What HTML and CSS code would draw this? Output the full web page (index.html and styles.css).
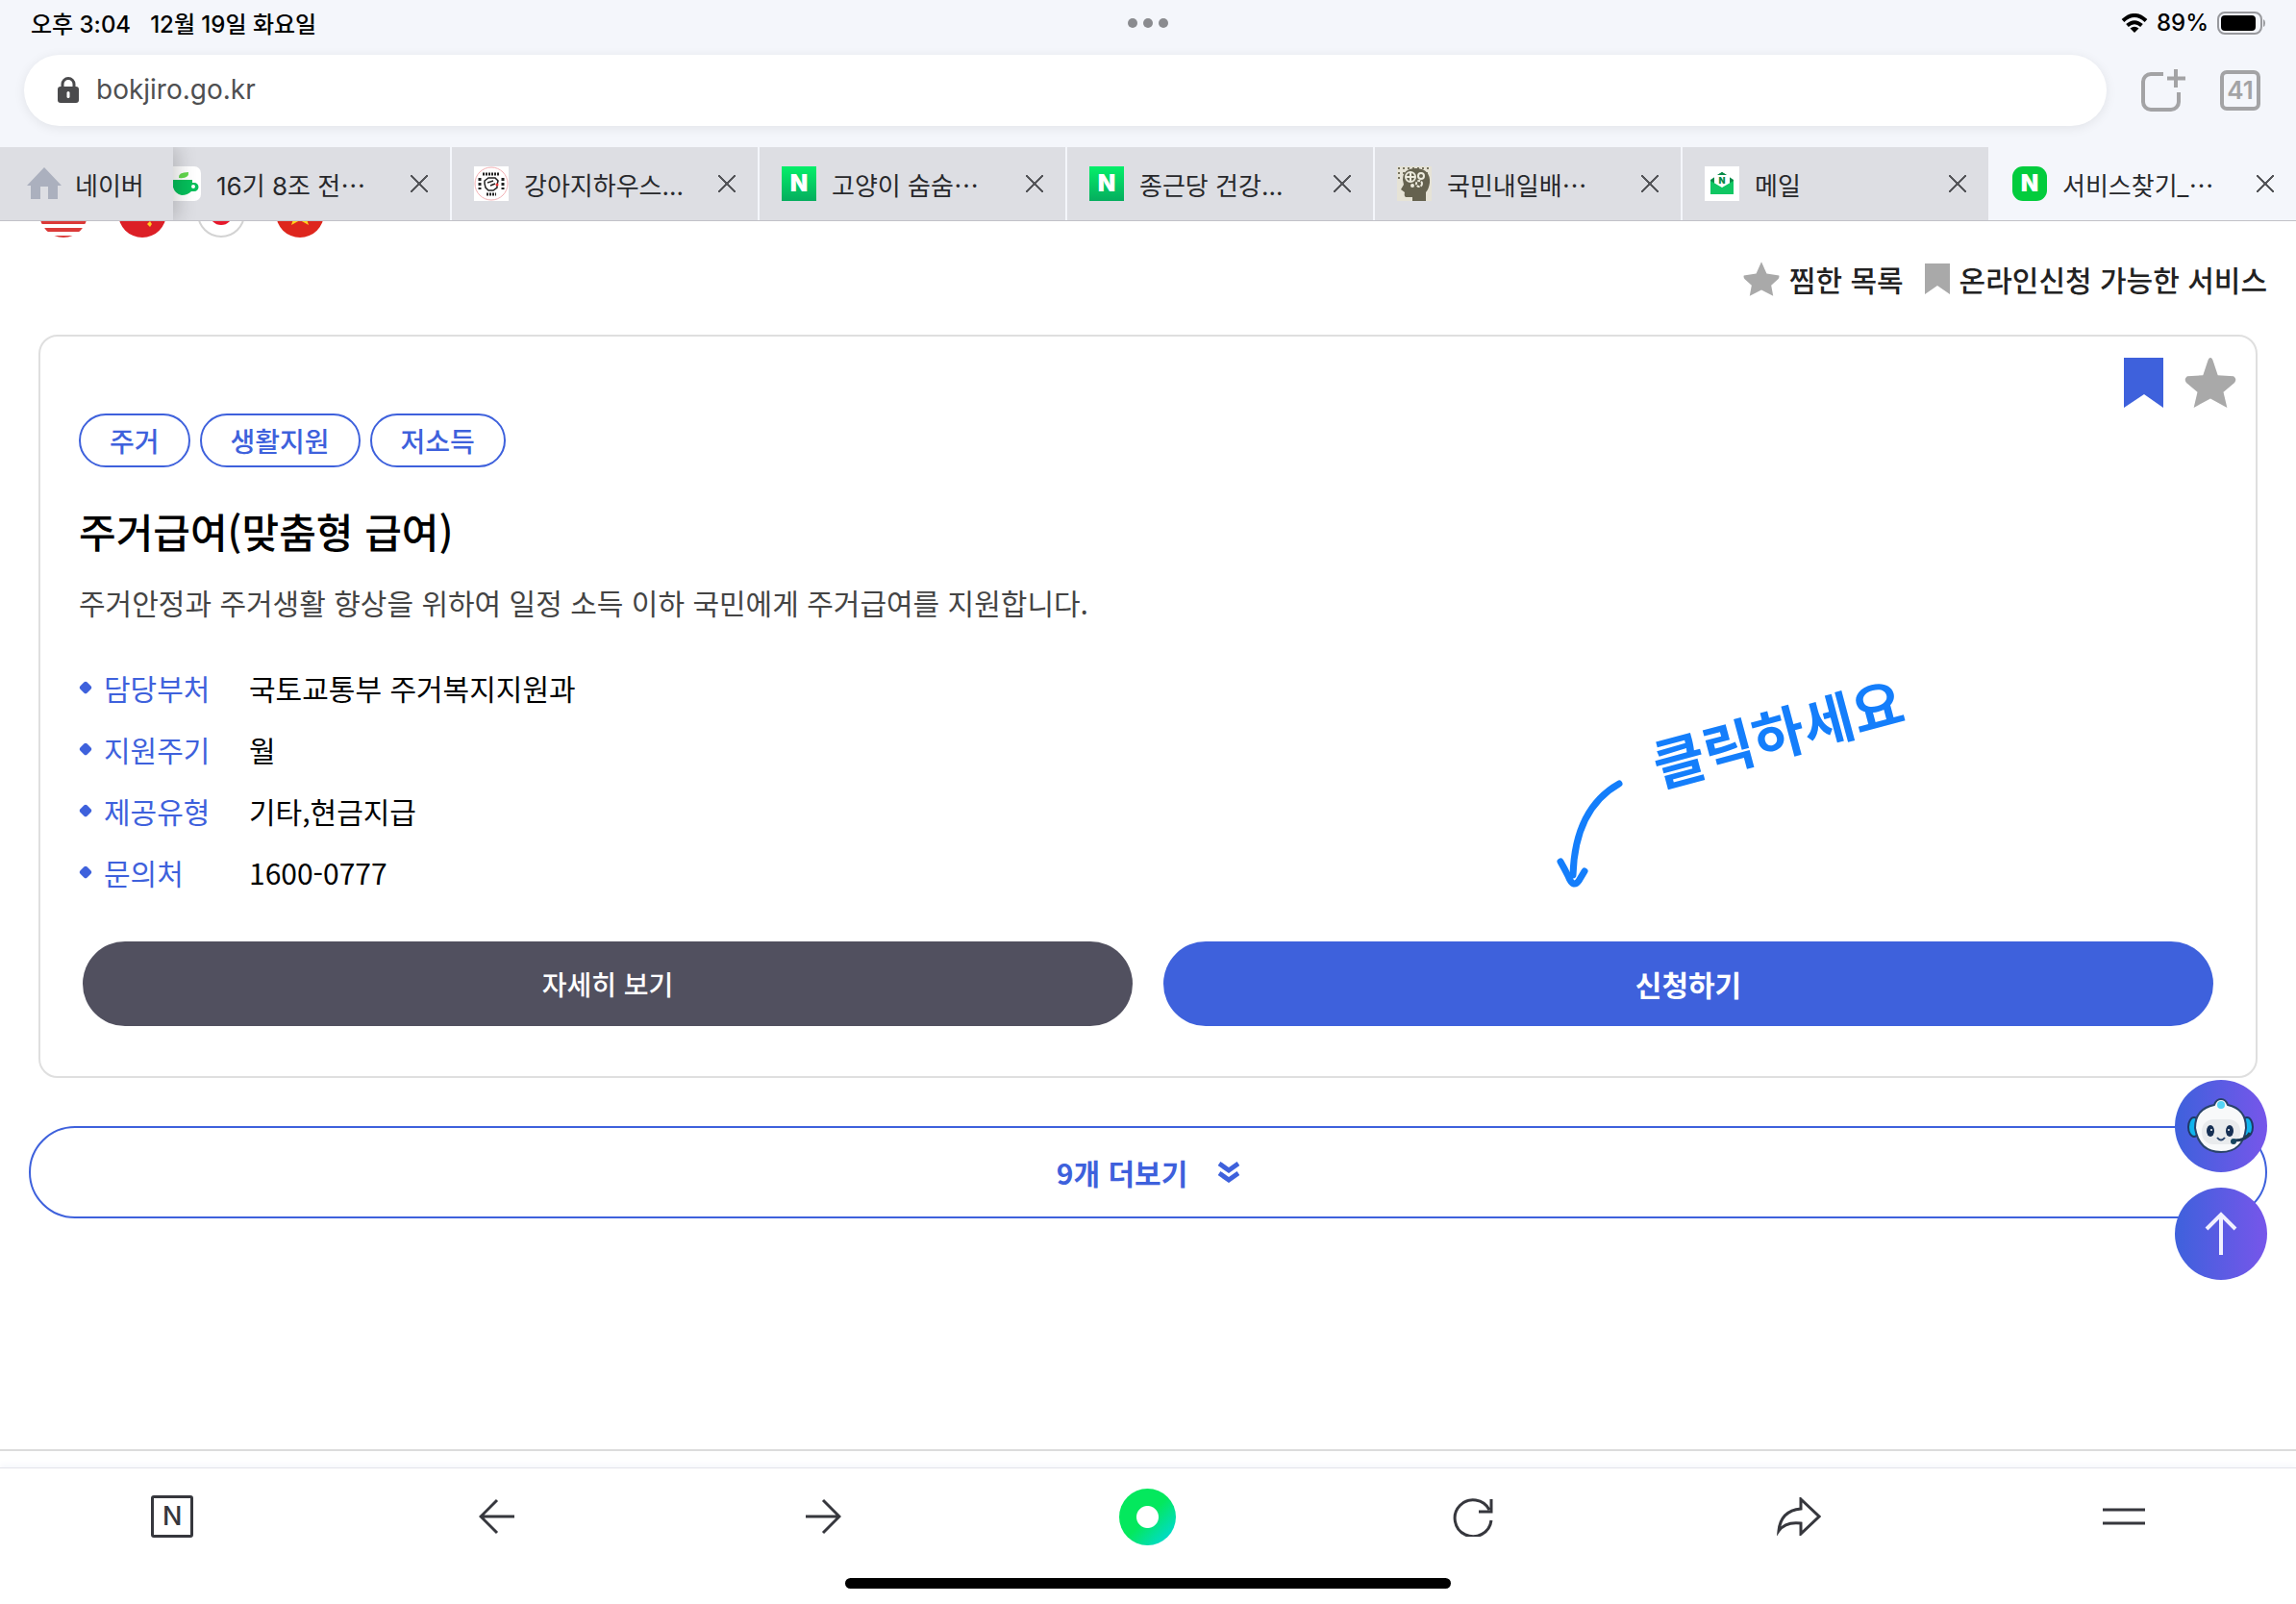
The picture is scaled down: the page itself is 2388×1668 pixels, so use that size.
FILE: index.html
```html
<!DOCTYPE html>
<html lang="ko">
<head>
    <meta charset="UTF-8">
    <meta name="viewport" content="width=device-width, initial-scale=1.0">
    <title>서비스찾기_복지로</title>
    <link rel="stylesheet" href="styles.css">
</head>
<body>
    <header class="browser-top">
        <div class="status-bar">
            <div class="status-left">
                <span>오후 3:04</span>
                <span>12월 19일 화요일</span>
            </div>
            <svg class="status-dots" width="44" height="12" viewBox="0 0 44 12" fill="#8a8b8f">
                <circle cx="6" cy="6" r="5"/><circle cx="22" cy="6" r="5"/><circle cx="38" cy="6" r="5"/>
            </svg>
            <div class="status-right">
                <svg width="28" height="20" viewBox="0 0 28 20" fill="none" stroke="#000" stroke-width="4">
                    <path d="M2 7.500Q14 -3.500 26 7.500"/>
                    <path d="M6.500 12.500Q14 6 21.500 12.500"/>
                    <path d="M14 20L9.500 15.500Q14 12 18.500 15.500Z" fill="#000" stroke="none"/>
                </svg>
                <span>89%</span>
                <svg width="50" height="24" viewBox="0 0 50 24">
                    <rect x="1" y="1" width="45" height="22" rx="7" fill="none" stroke="#98999d" stroke-width="2"/>
                    <rect x="4" y="4" width="36" height="16" rx="4"/>
                    <path d="M48 8Q50 9 50 12T48 16Z" fill="#98999d"/>
                </svg>
            </div>
        </div>

        <div class="address-row">
            <label class="address-bar">
                <svg width="22" height="28" viewBox="0 0 22 28">
                    <path d="M5 12V7.500a6 6 0 0 1 12 0V12" fill="none" stroke="#4a4a4c" stroke-width="3"/>
                    <rect x="0" y="10" width="22" height="17" rx="3" fill="#4a4a4c"/>
                    <rect x="9.500" y="15" width="3" height="7" rx="1.500" fill="#fff"/>
                </svg>
                <input type="text" class="address-input" value="bokjiro.go.kr" aria-label="주소">
            </label>
            <button class="icon-button" aria-label="새 탭">
                <svg width="48" height="46" viewBox="0 0 48 46" fill="none" stroke="#a3a3a5" stroke-width="4">
                    <path d="M24 6H11a8 8 0 0 0-8 8v21a8 8 0 0 0 8 8h21a8 8 0 0 0 8-8V25"/>
                    <path d="M37 1v19M28 10.500h19"/>
                </svg>
            </button>
            <button class="tab-count">41</button>
        </div>

        <nav class="tab-bar">
            <a href="#" class="home-tab">
                <svg width="36" height="34" viewBox="0 0 36 34" fill="#abb0be">
                    <path d="M18 0L36 19H32V33H22V20H14V33H4V19H0Z"/>
                </svg>
                <span>네이버</span>
            </a>
            <div class="tab-list">
                <div class="tab">
                    <svg class="favicon" viewBox="0 0 36 36">
                        <rect width="36" height="36" rx="7" fill="#fff"/>
                        <path d="M13 12Q12 6 23 6Q24 13 13 12Z" fill="#62d84e"/>
                        <path d="M6 14H27V17H29a4 4 0 0 1 0 9H26Q22 30 16 30Q6 28 6 14Z" fill="#05bf5b"/>
                        <circle cx="28" cy="21" r="2" fill="#fff"/>
                    </svg>
                    <span class="tab-title">16기 8조 전⋯</span>
                    <button class="tab-close" aria-label="닫기"></button>
                </div>
                <div class="tab">
                    <svg class="favicon" viewBox="0 0 36 36" fill="none" stroke="#222">
                        <rect width="36" height="36" fill="#fff" stroke="none"/>
                        <circle cx="18" cy="18" r="17" stroke="#f3b0b4"/>
                        <path d="M11 15L15 12H22L25 15L24 19V22L20 25H15L12 22L11 18ZM14 17L20 15M22 18L17 20" stroke-width="1.500"/>
                        <path d="M9 8H27M13 29H23" stroke-width="3" stroke-dasharray="2 1"/>
                        <path d="M6 12V24M30 12V24" stroke-width="3" stroke-dasharray="3 2"/>
                        <circle cx="24" cy="19" r="1.500" fill="#e33" stroke="none"/>
                    </svg>
                    <span class="tab-title">강아지하우스...</span>
                    <button class="tab-close" aria-label="닫기"></button>
                </div>
                <div class="tab">
                    <span class="favicon naver">N</span>
                    <span class="tab-title">고양이 숨숨⋯</span>
                    <button class="tab-close" aria-label="닫기"></button>
                </div>
                <div class="tab">
                    <span class="favicon naver">N</span>
                    <span class="tab-title">종근당 건강...</span>
                    <button class="tab-close" aria-label="닫기"></button>
                </div>
                <div class="tab">
                    <svg class="favicon" viewBox="0 0 36 36">
                        <rect width="36" height="36" fill="#e6e3d6"/>
                        <path d="M1 2H34M1 7H9M30 7H35M1 12H6" stroke="#77735f" stroke-width="2" stroke-dasharray="2 3"/>
                        <path d="M6 14Q6 2 20 2Q35 3 34 17Q33 24 30 27V36H16V32H9Q7 31 8 27L4 24L7 19Z" fill="#65624f"/>
                        <g fill="none" stroke="#eceadd" stroke-width="2">
                            <circle cx="14" cy="11" r="5"/><circle cx="25" cy="10" r="3"/><circle cx="23" cy="18" r="3" stroke-dasharray="3 1"/>
                            <path d="M14 7V15M10 11H18"/>
                        </g>
                        <circle cx="16" cy="20" r="2" fill="#eceadd"/>
                    </svg>
                    <span class="tab-title">국민내일배⋯</span>
                    <button class="tab-close" aria-label="닫기"></button>
                </div>
                <div class="tab">
                    <svg class="favicon" viewBox="0 0 36 36">
                        <rect width="36" height="36" fill="#fff"/>
                        <path d="M6 14L18 6L30 14V18H6Z" fill="#078a48"/>
                        <path d="M10 9H26V18L18 23L10 18Z" fill="#fff"/>
                        <path d="M13 9L18 6L23 9Z" fill="#078a48"/>
                        <path d="M6 15L18 22L30 15V29H6Z" fill="#10c763"/>
                        <text x="18" y="18" text-anchor="middle" class="mail-mark">N</text>
                    </svg>
                    <span class="tab-title">메일</span>
                    <button class="tab-close" aria-label="닫기"></button>
                </div>
                <div class="tab active">
                    <span class="favicon naver rounded">N</span>
                    <span class="tab-title">서비스찾기_⋯</span>
                    <button class="tab-close" aria-label="닫기"></button>
                </div>
            </div>
        </nav>
    </header>

    <main class="page">
        <div class="flags">
            <svg width="50" height="50" viewBox="0 0 50 50">
                <clipPath id="flagClip"><circle cx="25" cy="25" r="25"/></clipPath>
                <g clip-path="url(#flagClip)">
                    <rect width="50" height="50" fill="#fff"/>
                    <path d="M0 26H50M0 34H50M0 42H50M0 50H50" stroke="#db3a38" stroke-width="4"/>
                </g>
            </svg>
            <svg width="50" height="50" viewBox="0 0 50 50">
                <circle cx="25" cy="25" r="25" fill="#dc1f26"/>
                <path d="M33 33l2 3-2 3-3-3z" fill="#ffcf20"/>
            </svg>
            <svg width="50" height="50" viewBox="0 0 50 50">
                <circle cx="25" cy="25" r="24" fill="#fff" stroke="#d3d3d3" stroke-width="2"/>
                <circle cx="25" cy="25" r="12" fill="#e6182b"/>
            </svg>
            <svg width="50" height="50" viewBox="0 0 50 50">
                <circle cx="25" cy="25" r="25" fill="#de261d"/>
                <path d="M25 10L29 21H40L31 28L34 37L25 32L16 37L19 28L10 21H21Z" fill="#ffd21c"/>
            </svg>
        </div>

        <div class="legend">
            <a href="#" class="legend-item">
                <svg width="38" height="38" viewBox="0 0 56 56" fill="#a9a9a9"><path d="M28 2L36 20L55 23Q56 25 54 28L43 38L46 54L28 45L10 54L13 38L2 28Q0 25 1 23L20 20Z"/></svg>
                찜한 목록
            </a>
            <a href="#" class="legend-item">
                <svg width="26" height="32" viewBox="0 0 26 32" fill="#a9a9a9"><path d="M0 0H26V32L13 23L0 32Z"/></svg>
                온라인신청 가능한 서비스
            </a>
        </div>

        <article class="card">
            <div class="card-marks">
                <button class="icon-button" aria-label="온라인신청 가능">
                    <svg width="41" height="52" viewBox="0 0 41 52" fill="#3e61dc"><path d="M0 0H41V52L21 38L0 52Z"/></svg>
                </button>
                <button class="icon-button" aria-label="찜하기">
                    <svg width="56" height="54" viewBox="0 0 56 56" fill="#a9a9a9"><path d="M28 1Q30 1 31 5L36 20L53 21Q57 24 54 28L42 38L46 55L28 45L10 55L14 38L2 28Q-1 24 3 21L20 20L25 5Q26 1 28 1Z"/></svg>
                </button>
            </div>

            <ul class="tags">
                <li>주거</li>
                <li>생활지원</li>
                <li>저소득</li>
            </ul>
            <h2 class="card-title">주거급여(맞춤형 급여)</h2>
            <p class="card-desc">주거안정과 주거생활 향상을 위하여 일정 소득 이하 국민에게 주거급여를 지원합니다.</p>

            <dl class="info">
                <div><dt>담당부처</dt><dd>국토교통부 주거복지지원과</dd></div>
                <div><dt>지원주기</dt><dd>월</dd></div>
                <div><dt>제공유형</dt><dd>기타,현금지급</dd></div>
                <div><dt>문의처</dt><dd>1600-0777</dd></div>
            </dl>

            <div class="actions">
                <button class="detail-button">자세히 보기</button>
                <button class="apply-button">신청하기</button>
            </div>

            <!-- pen note over the apply button -->
            <svg class="note" width="440" height="300" viewBox="0 0 440 300">
                <g fill="none" stroke="#147efb" stroke-width="7" stroke-linecap="round" stroke-linejoin="round">
                    <path d="M104 155Q58 181 56 250"/>
                    <path d="M43 236Q47 243 51 251Q56 264 62 256L68 246"/>
                </g>
                <text x="270" y="125" text-anchor="middle" transform="rotate(-15 270 105)">클릭하세요</text>
            </svg>
        </article>

        <button class="more-button">
            9개 더보기
            <svg width="22" height="22" viewBox="0 0 22 22" fill="none" stroke="#3e61dc" stroke-width="5">
                <path d="M1 2L11 9L21 2M1 12L11 19L21 12"/>
            </svg>
        </button>

        <div class="floating">
            <button class="float-button" aria-label="챗봇">
                <svg width="70" height="60" viewBox="0 0 70 60">
                    <ellipse cx="7" cy="31" rx="6" ry="10" fill="#10b4ee" stroke="#1d3a66" stroke-width="2"/>
                    <ellipse cx="62" cy="31" rx="6" ry="10" fill="#10b4ee" stroke="#1d3a66" stroke-width="2"/>
                    <path d="M28 8Q30 2 35 2T42 8Q61 12 61 32Q58 57 35 57T8 32Q8 12 28 8Z" fill="#f8f9fa" stroke="#29436a" stroke-width="2"/>
                    <rect x="15" y="23" width="40" height="26" rx="12" fill="#e9ebed"/>
                    <circle cx="35" cy="8" r="4" fill="#55d5f7"/>
                    <ellipse cx="24" cy="35" rx="4" ry="6" fill="#162f53"/>
                    <ellipse cx="44" cy="35" rx="4" ry="6" fill="#162f53"/>
                    <circle cx="25" cy="34" r="1" fill="#fff"/><circle cx="43" cy="34" r="1" fill="#fff"/>
                    <path d="M31 42Q35 47 39 42" fill="none" stroke="#29436a" stroke-width="2"/>
                    <path d="M65 37Q61 45 49 45" fill="none" stroke="#1d3a55" stroke-width="3"/>
                    <circle cx="48" cy="46" r="3" fill="#14455f"/>
                </svg>
            </button>
            <button class="float-button" aria-label="맨 위로">
                <svg width="34" height="46" viewBox="0 0 34 46" fill="none" stroke="#f1f0ff" stroke-width="4">
                    <path d="M17 45V3M2 18L17 3L32 18"/>
                </svg>
            </button>
        </div>
    </main>

    <footer class="toolbar">
        <div class="toolbar-items">
            <button class="icon-button" aria-label="네이버 홈"><span class="n-box">N</span></button>
            <button class="icon-button" aria-label="뒤로">
                <svg width="38" height="38" viewBox="0 0 38 38"><path d="M37 19H2M19 2L2 19L19 36"/></svg>
            </button>
            <button class="icon-button" aria-label="앞으로">
                <svg width="38" height="38" viewBox="0 0 38 38"><path d="M1 19H36M19 2L36 19L19 36"/></svg>
            </button>
            <button class="icon-button" aria-label="그린닷"><span class="green-dot"></span></button>
            <button class="icon-button" aria-label="새로고침">
                <svg width="42" height="42" viewBox="0 0 42 42"><path d="M40 25A19 19 0 1 1 38 14M40 3V16H27"/></svg>
            </button>
            <button class="icon-button" aria-label="공유">
                <svg width="46" height="40" viewBox="0 0 46 40"><path d="M25 2L44 20L25 38V27Q9 25 2 35Q4 14 25 12Z"/></svg>
            </button>
            <button class="icon-button" aria-label="메뉴">
                <svg width="44" height="20" viewBox="0 0 44 20"><path d="M0 3H44M0 17H44"/></svg>
            </button>
        </div>
        <div class="home-indicator"></div>
    </footer>
</body>
</html>
```

FILE: styles.css
```css
* {
    margin: 0;
    padding: 0;
    box-sizing: border-box;
}

body {
    min-height: 100vh;
    display: flex;
    flex-direction: column;
    background: #fff;
    color: #000;
    font-family: 'Noto Sans CJK KR', sans-serif;
    font-size: 30px;
}

button,
input {
    border: none;
    background: none;
    font-family: inherit;
    font-size: inherit;
    color: inherit;
}

button {
    cursor: pointer;
}

a {
    color: inherit;
    text-decoration: none;
}

svg {
    display: block;
    flex: none;
}

.icon-button {
    display: flex;
    align-items: center;
    justify-content: center;
}

/* browser chrome */
.browser-top {
    position: relative;
    z-index: 1;
    background: #f4f6fb;
    font-family: Inter, 'Noto Sans CJK KR', sans-serif;
}

.status-bar {
    height: 47px;
    padding: 0 32px;
    display: grid;
    grid-template-columns: 1fr auto 1fr;
    align-items: center;
    font-size: 24px;
    font-weight: 500;
}

.status-left {
    display: flex;
    gap: 20px;
}

.status-right {
    display: flex;
    align-items: center;
    justify-content: flex-end;
    gap: 9px;
}

.address-row {
    display: flex;
    align-items: center;
    gap: 35px;
    padding: 10px 37px 22px 25px;
}

.address-bar {
    flex: 1;
    height: 74px;
    padding: 0 35px;
    display: flex;
    align-items: center;
    gap: 18px;
    border-radius: 37px;
    background: #fff;
    box-shadow: 0 2px 12px rgba(0, 0, 0, 0.08);
}

.address-input {
    flex: 1;
    padding-bottom: 2px;
    color: #4f4f51;
    font-size: 28px;
    outline: none;
}

.tab-count {
    width: 42px;
    height: 42px;
    border: 4px solid #a3a3a5;
    border-radius: 7px;
    color: #a3a3a5;
    font-size: 26px;
    font-weight: 600;
    line-height: 34px;
}

.tab-bar {
    display: flex;
    height: 77px;
    background: #dddee3;
    border-bottom: 1px solid #c2c2c8;
    color: #27282b;
    font-size: 26px;
}

.home-tab {
    width: 180px;
    flex: none;
    display: flex;
    align-items: center;
    gap: 14px;
    padding-left: 28px;
    box-shadow: 4px 0 20px rgba(0, 0, 0, 0.2);
    clip-path: inset(0 -24px 0 0);
}

/* newest tab stays in view, older ones slide under the home tab */
.tab-list {
    flex: 1;
    min-width: 0;
    display: flex;
    justify-content: flex-end;
    overflow: hidden;
}

.tab {
    width: 320px;
    flex: none;
    display: flex;
    align-items: center;
    gap: 16px;
    padding: 0 23px;
    border-left: 2px solid #f4f6fb;
}

.tab.active {
    background: #f4f6fb;
}

.favicon {
    width: 36px;
    height: 36px;
    flex: none;
}

.naver {
    background: linear-gradient(#04ef69, #05ad5e);
    color: #fff;
    font-size: 24px;
    font-weight: 900;
    line-height: 36px;
    text-align: center;
}

.naver.rounded {
    border-radius: 11px;
    background: #03cc3d;
}

.mail-mark {
    font-size: 9px;
    font-weight: 900;
    fill: #078a48;
}

.tab-title {
    flex: 1;
    white-space: nowrap;
}

.tab-close {
    width: 18px;
    height: 18px;
    background:
        linear-gradient(45deg, transparent 47%, #55565a 47%, #55565a 53%, transparent 53%),
        linear-gradient(-45deg, transparent 47%, #55565a 47%, #55565a 53%, transparent 53%);
}

/* page */
.page {
    flex: 1;
    position: relative;
    padding: 0 30px;
    border-bottom: 2px solid #dcdcdc;
}

.flags {
    display: flex;
    gap: 32px;
    margin-top: -33px;
    padding-left: 11px;
}

.legend {
    display: flex;
    justify-content: flex-end;
    gap: 22px;
    padding: 20px 0 35px;
    color: #222;
    font-weight: 500;
    line-height: 46px;
}

.legend-item {
    display: flex;
    align-items: center;
    gap: 10px;
}

.card {
    position: relative;
    margin: 0 10px 50px;
    padding: 80px 40px 52px;
    border: 2px solid #dfdfdf;
    border-radius: 20px;
}

.card-marks {
    position: absolute;
    top: 21px;
    right: 19px;
    display: flex;
    gap: 21px;
}

.tags {
    display: flex;
    gap: 10px;
    list-style: none;
}

.tags li {
    padding: 0 30px;
    border: 2px solid #3e61dc;
    border-radius: 28px;
    color: #3e61dc;
    font-size: 28px;
    font-weight: 500;
    line-height: 52px;
}

.card-title {
    margin-top: 36px;
    font-size: 42px;
    font-weight: 500;
    line-height: 60px;
}

.card-desc {
    margin-top: 20px;
    color: #444;
    line-height: 48px;
}

.info {
    margin-top: 33px;
    line-height: 64px;
}

.info div {
    display: flex;
}

.info dt {
    width: 177px;
    display: flex;
    align-items: center;
    gap: 14px;
    color: #3e61dc;
}

.info dt::before {
    content: "";
    width: 10px;
    height: 10px;
    margin-left: 2px;
    background: #3e61dc;
    border-radius: 2px;
    transform: rotate(45deg);
}

.actions {
    display: grid;
    grid-template-columns: 1fr 1fr;
    gap: 32px;
    margin: 40px 4px 0;
}

.actions button {
    height: 88px;
    border-radius: 44px;
    color: #fff;
}

.detail-button {
    background: #51505f;
    font-size: 28px;
    font-weight: 500;
}

.apply-button {
    background: #3e61dc;
    font-weight: 700;
}

.note {
    position: absolute;
    top: 310px;
    right: 326px;
    pointer-events: none;
}

.note text {
    fill: #147efb;
    font-size: 58px;
    font-weight: 700;
}

.more-button {
    width: 100%;
    height: 96px;
    display: flex;
    align-items: center;
    justify-content: center;
    gap: 32px;
    border: 2px solid #3e61dc;
    border-radius: 48px;
    color: #3e61dc;
    font-weight: 700;
}

.floating {
    position: fixed;
    right: 30px;
    bottom: 337px;
    display: flex;
    flex-direction: column;
    gap: 16px;
}

.float-button {
    width: 96px;
    height: 96px;
    display: flex;
    align-items: center;
    justify-content: center;
    border-radius: 50%;
    background: linear-gradient(90deg, #3e61dc, #7756ea);
}

/* bottom toolbar */
.toolbar {
    margin-top: 17px;
    padding: 0 10px;
    border-top: 1px solid #e2e3ea;
    box-shadow: 0 -4px 6px #f8f9fd;
}

.toolbar-items {
    height: 100px;
    display: grid;
    grid-template-columns: repeat(7, 1fr);
    align-items: center;
}

.toolbar svg {
    fill: none;
    stroke: #36373d;
    stroke-width: 3;
}

.n-box {
    width: 44px;
    height: 44px;
    border: 3px solid #36373d;
    border-radius: 3px;
    color: #36373d;
    font-family: Inter, sans-serif;
    font-size: 27px;
    font-weight: 500;
    line-height: 38px;
}

.green-dot {
    width: 59px;
    height: 59px;
    border-radius: 50%;
    background: radial-gradient(circle, #fff 11px, transparent 12px), linear-gradient(135deg, #04e85d 50%, #00d6f0);
}

.home-indicator {
    width: 630px;
    height: 11px;
    margin: 14px auto 16px;
    border-radius: 6px;
    background: #000;
}
```
